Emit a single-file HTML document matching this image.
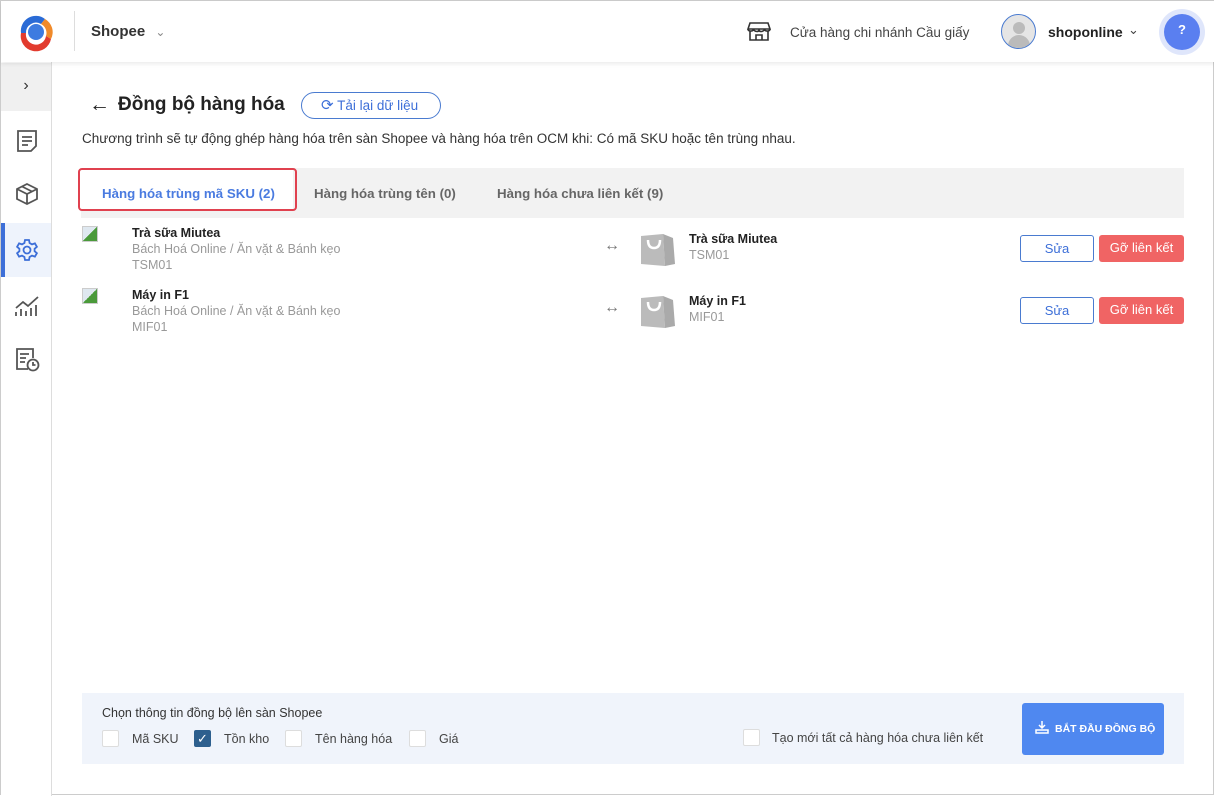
<!DOCTYPE html>
<html><head><meta charset="utf-8"><style>
*{box-sizing:border-box;margin:0;padding:0}
body{width:1214px;height:795px;overflow:hidden;background:#fff;font-family:"Liberation Sans",sans-serif;color:#333;position:relative;border:1px solid #ccc}
.abs{position:absolute}
.hdr{left:0;top:0;width:1214px;height:61px;background:#fff;box-shadow:0 2px 4px rgba(0,0,0,.08);z-index:2}
.side{left:0;top:61px;width:51px;height:734px;border-right:1px solid #ddd;background:#fff}
.t13{font-size:12.5px}
.cb{width:17px;height:17px;border:1px solid #ddd;border-radius:2px;background:#fff}
.btn{border-radius:3px;font-size:13px;text-align:center;line-height:26px;height:27px}
</style></head><body>
<div class="abs hdr">
 <svg class="abs" style="left:14px;top:10px" width="42" height="42" viewBox="0 0 42 42">
  <path d="M6 22 A15 15 0 0 1 30 8 L26 13 A10 10 0 0 0 11 22Z" fill="#2a6bd6"/>
  <path d="M30 8 A15 15 0 0 1 36 28 L31 25 A10 10 0 0 0 26 13Z" fill="#f08a2a"/>
  <path d="M36 28 A15 15 0 0 1 6 22 L11 22 A10 10 0 0 0 31 25Z" fill="#e23b2e"/>
  <circle cx="21" cy="21" r="8" fill="#3d7be0"/>
 </svg>
 <div class="abs" style="left:73px;top:10px;width:1px;height:40px;background:#ddd"></div>
 <div class="abs" style="left:90px;top:22px;font-size:15px;font-weight:bold;color:#333">Shopee <span style="font-weight:normal;color:#888;font-size:12px;margin-left:6px">&#8964;</span></div>
 <svg class="abs" style="left:746px;top:20px" width="24" height="20" viewBox="0 0 24 20" fill="none" stroke="#333" stroke-width="1.6"><path d="M3 2h18l2 6H1z M1 8c0 2 3 3 5.5 1c2.5 2 5 2 5.5 0c.5 2 3 2 5.5 0c2.5 2 5.5 1 5.5-1 M3 10v9h18v-9 M9 19v-5h6v5"/></svg>
 <div class="abs" style="left:789px;top:24px;font-size:13.5px;color:#444">Cửa hàng chi nhánh Cầu giấy</div>
 <div class="abs" style="left:1000px;top:13px;width:35px;height:35px;border-radius:50%;border:1px solid #4a7bd0;background:#e5e5e5;overflow:hidden">
  <div class="abs" style="left:11px;top:7px;width:12px;height:12px;border-radius:50%;background:#bbb"></div>
  <div class="abs" style="left:6px;top:20px;width:22px;height:16px;border-radius:11px 11px 0 0;background:#bbb"></div></div>
 <div class="abs" style="left:1047px;top:23px;font-size:14px;font-weight:bold;color:#222">shoponline</div>
 <div class="abs" style="left:1127px;top:21px;font-size:13px;color:#444">&#8964;</div>
 <div class="abs" style="left:1158px;top:8px;width:46px;height:46px;border-radius:50%;background:#dfe6fb"></div>
 <div class="abs" style="left:1163px;top:13px;width:36px;height:36px;border-radius:50%;background:#5a7ff0;color:#fff;font-size:13px;font-weight:bold;text-align:center;line-height:32px">?</div>
</div>
<div class="abs side">
 <div class="abs" style="left:0;top:1px;width:50px;height:48px;background:#f0f0f0;text-align:center;line-height:46px;font-size:16px;color:#333">&#8250;</div>
 <svg class="abs" style="left:15px;top:67px" width="22" height="24" viewBox="0 0 22 24" fill="none" stroke="#555" stroke-width="1.8"><path d="M2 2h18v15l-5 5H2z M6 8h10 M6 12h10 M6 16h6"/></svg>
 <svg class="abs" style="left:14px;top:120px" width="24" height="24" viewBox="0 0 24 24" fill="none" stroke="#555" stroke-width="1.8"><path d="M12 2l10 5v10l-10 5l-10-5V7z M2 7l10 5l10-5 M12 12v10 M7 4.5l10 5"/></svg>
 <div class="abs" style="left:0;top:161px;width:50px;height:54px;background:#eef3fc;border-left:4px solid #3d6fd8"></div>
 <svg class="abs" style="left:14px;top:176px" width="24" height="24" viewBox="0 0 24 24" fill="none" stroke="#3d6fd8" stroke-width="1.8"><circle cx="12" cy="12" r="3.5"/><path d="M10 2h4l.6 3 2.4 1.4 2.9-1 2 3.4-2.3 2v2.4l2.3 2-2 3.4-2.9-1L14.6 19 14 22h-4l-.6-3L7 17.6l-2.9 1-2-3.4 2.3-2v-2.4l-2.3-2 2-3.4 2.9 1L9.4 5z"/></svg>
 <svg class="abs" style="left:13px;top:232px" width="26" height="24" viewBox="0 0 26 24" fill="none" stroke="#555" stroke-width="1.8"><path d="M2 14l7-6 5 4 10-9 M2 22v-4 M7 22v-7 M12 22v-5 M17 22v-8 M22 22v-11"/></svg>
 <svg class="abs" style="left:14px;top:285px" width="26" height="26" viewBox="0 0 26 26" fill="none" stroke="#555" stroke-width="1.8"><path d="M13 22H2V2h16v9 M5 7h9 M5 11h6 M5 15h5"/><circle cx="18" cy="18" r="5.5"/><path d="M18 15v3h2.5"/></svg>
</div>
<div class="abs" style="left:88px;top:92px;font-size:21px;color:#222">&#8592;</div>
<div class="abs" style="left:117px;top:93px;font-size:19px;font-weight:bold;color:#222">Đồng bộ hàng hóa</div>
<div class="abs" style="left:300px;top:91px;width:140px;height:27px;border:1px solid #4a7bd0;border-radius:14px;color:#3d6fd8;font-size:13.5px;line-height:25px;padding-left:19px"><span style="font-size:15px">&#10227;</span> Tải lại dữ liệu</div>
<div class="abs" style="left:81px;top:130px;font-size:13.5px;color:#333">Chương trình sẽ tự động ghép hàng hóa trên sàn Shopee và hàng hóa trên OCM khi: Có mã SKU hoặc tên trùng nhau.</div>
<div class="abs" style="left:80px;top:167px;width:1103px;height:50px;background:#f2f2f2"></div>
<div class="abs" style="left:80px;top:167px;width:212px;height:42px;background:#fff"></div>
<div class="abs" style="left:77px;top:167px;width:219px;height:43px;border:2px solid #e0414f;border-radius:4px"></div>
<div class="abs" style="left:101px;top:185px;font-size:13.3px;font-weight:bold;color:#4a7be0">Hàng hóa trùng mã SKU (2)</div>
<div class="abs" style="left:313px;top:185px;font-size:13.3px;font-weight:bold;color:#666">Hàng hóa trùng tên (0)</div>
<div class="abs" style="left:496px;top:185px;font-size:13.3px;font-weight:bold;color:#666">Hàng hóa chưa liên kết (9)</div>
<div class="abs" style="left:81px;top:225px;width:16px;height:16px;border:1px solid #ccc;background:linear-gradient(135deg,#dfe8f0 50%,#4a9a3a 50%)"></div>
<div class="abs" style="left:131px;top:225px;font-size:12.5px;font-weight:bold;color:#222">Trà sữa Miutea</div>
<div class="abs t13" style="left:131px;top:241px;color:#999">Bách Hoá Online / Ăn vặt &amp; Bánh kẹo</div>
<div class="abs t13" style="left:131px;top:257px;color:#999">TSM01</div>
<div class="abs" style="left:81px;top:287px;width:16px;height:16px;border:1px solid #ccc;background:linear-gradient(135deg,#dfe8f0 50%,#4a9a3a 50%)"></div>
<div class="abs" style="left:131px;top:287px;font-size:12.5px;font-weight:bold;color:#222">Máy in F1</div>
<div class="abs t13" style="left:131px;top:303px;color:#999">Bách Hoá Online / Ăn vặt &amp; Bánh kẹo</div>
<div class="abs t13" style="left:131px;top:319px;color:#999">MIF01</div>
<div class="abs" style="left:603px;top:236px;font-size:16px;color:#777">&#8596;</div>
<svg class="abs" style="left:638px;top:231px" width="38" height="34" viewBox="0 0 38 34"><path d="M2 4l22-2 2 32-24-2z" fill="#bbb"/><path d="M24 2l10 4 2 26-10 2z" fill="#aaa"/><path d="M9 8q0 8 6 8t6-8" fill="none" stroke="#fff" stroke-width="2.5"/></svg>
<div class="abs" style="left:688px;top:231px;font-size:12.5px;font-weight:bold;color:#222">Trà sữa Miutea</div>
<div class="abs t13" style="left:688px;top:247px;color:#999">TSM01</div>
<div class="abs" style="left:603px;top:298px;font-size:16px;color:#777">&#8596;</div>
<svg class="abs" style="left:638px;top:293px" width="38" height="34" viewBox="0 0 38 34"><path d="M2 4l22-2 2 32-24-2z" fill="#bbb"/><path d="M24 2l10 4 2 26-10 2z" fill="#aaa"/><path d="M9 8q0 8 6 8t6-8" fill="none" stroke="#fff" stroke-width="2.5"/></svg>
<div class="abs" style="left:688px;top:293px;font-size:12.5px;font-weight:bold;color:#222">Máy in F1</div>
<div class="abs t13" style="left:688px;top:309px;color:#999">MIF01</div>
<div class="abs btn" style="left:1019px;top:234px;width:74px;border:1px solid #4a7bd0;color:#3d6fd8">Sửa</div>
<div class="abs btn" style="left:1098px;top:234px;width:85px;background:#f06464;color:#fff">Gỡ liên kết</div>
<div class="abs btn" style="left:1019px;top:296px;width:74px;border:1px solid #4a7bd0;color:#3d6fd8">Sửa</div>
<div class="abs btn" style="left:1098px;top:296px;width:85px;background:#f06464;color:#fff">Gỡ liên kết</div>
<div class="abs" style="left:81px;top:692px;width:1102px;height:71px;background:#f0f4fb"></div>
<div class="abs t13" style="left:101px;top:705px;color:#333">Chọn thông tin đồng bộ lên sàn Shopee</div>
<div class="abs cb" style="left:101px;top:729px"></div>
<div class="abs t13" style="left:131px;top:731px;color:#444">Mã SKU</div>
<div class="abs cb" style="left:193px;top:729px;background:#2d5f8e;border-color:#2d5f8e;color:#fff;font-size:13px;text-align:center;line-height:15px">&#10003;</div>
<div class="abs t13" style="left:223px;top:731px;color:#444">Tồn kho</div>
<div class="abs cb" style="left:284px;top:729px"></div>
<div class="abs t13" style="left:314px;top:731px;color:#444">Tên hàng hóa</div>
<div class="abs cb" style="left:408px;top:729px"></div>
<div class="abs t13" style="left:438px;top:731px;color:#444">Giá</div>
<div class="abs cb" style="left:742px;top:728px"></div>
<div class="abs t13" style="left:771px;top:730px;color:#444">Tạo mới tất cả hàng hóa chưa liên kết</div>
<div class="abs" style="left:1021px;top:702px;width:142px;height:52px;background:#4f88f0;border-radius:3px;color:#fff;font-size:10.5px;font-weight:bold;line-height:52px;padding-left:13px;white-space:nowrap">
<svg style="vertical-align:-2px;margin-right:6px" width="14" height="14" viewBox="0 0 14 14" fill="none" stroke="#fff" stroke-width="1.5"><path d="M7 1v7 M4 5l3 3 3-3 M1 10h12v3H1z"/></svg>BẮT ĐẦU ĐỒNG BỘ</div>
</body></html>
